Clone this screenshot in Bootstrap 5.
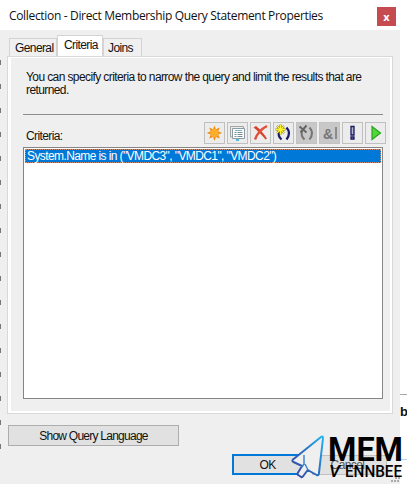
<!DOCTYPE html>
<html lang="en">
<head>
<meta charset="utf-8">
<meta name="viewport" content="width=device-width, initial-scale=1">
<title>Query Statement Properties</title>
<link href="https://cdn.jsdelivr.net/npm/bootstrap@5.3.0/dist/css/bootstrap.min.css" rel="stylesheet">
<style>
body{width:407px;height:484px;overflow:hidden;background:#fff;font:12px/14px "Liberation Sans",Arial,sans-serif;letter-spacing:-.6px;color:#111}
.backdrop{width:7px;background:linear-gradient(#fff 394px,#aaa 394px,#aaa 395px,#fff 395px,#fff 459px,#b6d3ee 459px,#b6d3ee 460px,#fff 460px);padding-top:404px;font-weight:700;font-size:13px;line-height:15px}
.dialog{width:400px;height:484px;background:#efefef}
.titlebar{height:30px;background:#fff;padding:0 4px 0 9px}
.caption{font:12px/30px "Open Sans","Noto Sans",sans-serif;white-space:nowrap;letter-spacing:-.33px;padding-top:1px}
.closebox{width:19px;height:19px;background:#c64b50;color:#fff;border:0;padding:0;font:bold 11px/16px "Open Sans",sans-serif}
.tabstrip{height:26px;padding-left:9px;border:0;flex-wrap:nowrap}
.tabstrip .nav-link{border:1px solid #d4d4d4;border-bottom:0;border-radius:0;background:#f0f0f0;color:#111;height:18px;padding:2px 0 0 5px;line-height:14px;margin:0;white-space:nowrap}
.tabstrip .nav-link.active{background:#fff;height:21px;color:#111;border-color:#d4d4d4;padding-left:6px}
.tabstrip .nav-link:last-child{padding-left:4px}
.panel{margin:0 7px;height:358px;border:1px solid #d9d9d9;box-shadow:inset 3px 0 #fff,inset -2px -2px #fff,inset 0 1px #fff;padding:14px 9px 0 15px}
.intro{padding-left:3px;line-height:13px;height:43px;white-space:nowrap}
.rule{height:1px;background:#8c8c8c}
.tools{height:32px;margin-right:-3px}
.tool-row{gap:2px;padding-top:7px}
.tool{width:21px;height:22px;border:1px solid #c0c0c0;border-radius:0;background:#ececec;padding:0;display:flex;align-items:center;justify-content:center}
.tool:disabled{background:#c8c8c8;border-color:#c3c3c3;opacity:1}
.tool svg{width:19px;height:20px;display:block}
.criteria{height:252px;border:1px solid #858585;background:#fff;padding:1px}
.criteria .list-group-item{height:14px;padding:0 0 0 1px;border:1px dotted #c98a72;background:#0078d7;color:#fff;line-height:13px;border-radius:0;white-space:nowrap}
.push{border:1px solid #adadad;border-radius:0;background:#e1e1e1;color:#111;padding:0;font:12px/14px "Liberation Sans",sans-serif;letter-spacing:-.6px;white-space:nowrap}
.query{width:171px;height:21px;margin:11px 0 0 8px;letter-spacing:-.75px}
.foot{padding:8px 13px 0 232px}
.ok{width:73px;height:21px;border:2px solid #0078d7;padding-right:2px}
.cancel{width:75px;height:20px;margin-top:1px;border-color:#c2c2c2;color:#555;padding-right:4px}
.edge{position:absolute;left:0;top:58px;width:1px;height:400px;background:linear-gradient(#777 5px,transparent 5px) 0 2px/1px 24px}
.logo{position:absolute;left:288px;top:430px;width:118px;height:54px;letter-spacing:0}
</style>
</head>
<body class="d-flex position-relative">
<main class="dialog flex-shrink-0">
  <header class="titlebar d-flex justify-content-between align-items-center">
    <span class="caption">Collection - Direct Membership Query Statement Properties</span>
    <button class="closebox align-self-end mb-1" aria-label="Close">x</button>
  </header>
  <nav class="nav nav-tabs tabstrip align-items-end">
    <a class="nav-link" style="width:48px" href="#">General</a>
    <a class="nav-link active" style="width:46px" href="#">Criteria</a>
    <a class="nav-link" style="width:39px" href="#">Joins</a>
  </nav>
  <section class="panel">
    <div class="intro">You can specify criteria to narrow the query and limit the results that are<br>returned.</div>
    <div class="rule"></div>
    <div class="tools d-flex justify-content-between">
      <label class="align-self-end pb-1" style="padding-left:3px">Criteria:</label>
      <div class="d-flex tool-row">
        <button class="tool" aria-label="New"><svg viewBox="0 0 19 20"><path d="M9.500 2.500l1.300 3.700 3.900-1.700-1.500 3.700 4 1.800-4 1.600 1.600 3.900-3.900-1.600-1.400 4-1.500-4-3.800 1.600 1.500-3.900-4-1.600 4-1.800-1.500-3.700 3.800 1.700z" fill="#f08c12"/><circle cx="9.500" cy="10" r="4.200" fill="#fbae2c"/></svg></button>
        <button class="tool" aria-label="Properties"><svg viewBox="0 0 19 20"><path d="M2.500 14V3.500h13v2M2.500 14h2" fill="none" stroke="#a0a5a6"/><path d="M4.500 5.500h12v10h-12z" fill="#fff" stroke="#8b9ba1"/><path d="M7 7.500h7" stroke="#71b6d2"/><path d="M6.500 9.500h2m1 0h5m-8 2h2m1 0h5m-8 2h2m1 0h5" stroke="#7b8d94"/><path d="M8 17h3" stroke="#52bce7" stroke-width="2"/></svg></button>
        <button class="tool" aria-label="Delete"><svg viewBox="0 0 19 20"><path d="M2.500 4.500l2.500-1.500c4 3 8 8 11 12.500l-1.500 1C11 12 7 8 2.500 4.500z" fill="#d9412f"/><path d="M16 3C10 6 6 11 4 16.500" fill="none" stroke="#e34e36" stroke-width="2.400"/></svg></button>
        <button class="tool" aria-label="Group"><svg viewBox="0 0 19 20"><path d="M5 8q-1.500 5 2.500 8.500M12.500 4.500q5 5.500 0 12" fill="none" stroke="#18186c" stroke-width="2.200"/><path d="M6.500 1.500v10M1.500 6.500h10M3 3l7 7M10 3l-7 7" stroke="#655f16" stroke-width="1.900"/><path d="M6.500 1.500v10M1.500 6.500h10M3 3l7 7M10 3l-7 7" stroke="#fff22e" stroke-width="1.300"/></svg></button>
        <button class="tool" disabled aria-label="Ungroup"><svg viewBox="0 0 19 20"><path d="M5 8q-1.500 5 2.500 8.500M12.500 4.500q5 5.500 0 12" fill="none" stroke="#747474" stroke-width="2"/><path d="M2.500 3.500l7 6M9.500 2.500l-6 7" stroke="#666" stroke-width="2"/></svg></button>
        <button class="tool" disabled aria-label="And or"><svg viewBox="0 0 19 20"><text x="3" y="15.500" font-size="14" font-weight="bold" fill="#777">&amp;</text><path d="M16 4v12" stroke="#777" stroke-width="1.500"/></svg></button>
        <button class="tool" aria-label="Not"><svg viewBox="0 0 19 20"><path d="M8 3.500h3v8.500H8zM8 14h3v2H8z" fill="#b0b4cc" stroke="#18185f" stroke-width="1.300"/></svg></button>
        <button class="tool" aria-label="Run"><svg viewBox="0 0 19 20"><path d="M6 3.500v13l8.500-6.500z" fill="#50d83b" stroke="#28a321" stroke-width="1.200"/></svg></button>
      </div>
    </div>
    <div class="criteria list-group rounded-0">
      <div class="list-group-item">System.Name is in ("VMDC3", "VMDC1", "VMDC2")</div>
    </div>
  </section>
  <button class="push query d-block">Show Query Language</button>
  <footer class="foot d-flex justify-content-between">
    <button class="push ok">OK</button>
    <button class="push cancel">Cancel</button>
  </footer>
</main>
<aside class="backdrop flex-shrink-0">b</aside>
<div class="edge"></div>
<svg class="logo" viewBox="288 430 118 54">
  <defs><linearGradient id="arrow" x1="0" y1="1" x2="1" y2="0"><stop stop-color="#3b459e"/><stop offset=".5" stop-color="#286fc0"/><stop offset="1" stop-color="#25b4f2"/></linearGradient></defs>
  <path d="M321 437L293 459.500q-1.500 1.500.5 2.500l8.500 4-4.500 7.500q-.3 1 .7 1.500l3 2q1 .4 1.700-.5l4.800-6.500 9 5q2 .8 2.200-1.500l4.100-35q0-3-2-1.500z" fill="#efefef" stroke="url(#arrow)" stroke-width="2" stroke-linejoin="round"/>
  <path d="M304 455v9l-2 3M305 464l3 6" fill="none" stroke="#387fc9" stroke-width="1.400"/>
  <g fill="#000" font-family="Roboto,sans-serif" font-weight="bold">
    <text x="328" y="461" font-size="32.500" textLength="75" lengthAdjust="spacingAndGlyphs">MEM</text>
    <text x="329" y="477" font-size="17" textLength="11" lengthAdjust="spacingAndGlyphs" font-style="italic" font-weight="500">V</text>
    <text x="345" y="477" font-size="17" textLength="57" lengthAdjust="spacingAndGlyphs" font-weight="500">ENNBEE</text>
  </g>
  <path d="M395 478h2m1 0h2M391 481h2m1 0h2m1 0h2" stroke="#aaa" stroke-width="2"/>
</svg>
<script src="https://cdn.jsdelivr.net/npm/bootstrap@5.3.0/dist/js/bootstrap.bundle.min.js"></script>
</body>
</html>
